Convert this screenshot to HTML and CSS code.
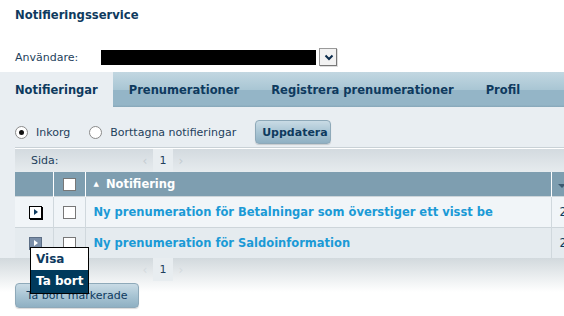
FILE: index.html
```html
<!DOCTYPE html>
<html lang="sv">
<head>
    <meta charset="UTF-8">
    <title>Notifieringsservice</title>
    <link rel="stylesheet" href="styles.css">
</head>
<body>
    <header class="top">
        <h1 class="title">Notifieringsservice</h1>
        <div class="user-row">
            <label class="user-label">Användare:</label>
            <span class="user-value"></span>
            <span class="select-btn">
                <svg width="10" height="7" viewBox="0 0 10 7"><path d="M1.5 1.5 L5 5 L8.5 1.5" fill="none" stroke="#0c2c4c" stroke-width="2"/></svg>
            </span>
        </div>
    </header>

    <nav class="tabs">
        <a class="tab active">Notifieringar</a>
        <a class="tab">Prenumerationer</a>
        <a class="tab">Registrera prenumerationer</a>
        <a class="tab">Profil</a>
    </nav>

    <main class="panel">
        <div class="filter-row">
            <label class="radio"><span class="radio-dot checked"></span>Inkorg</label>
            <label class="radio"><span class="radio-dot"></span>Borttagna notifieringar</label>
            <button class="btn btn-bold">Uppdatera</button>
        </div>

        <div class="pager pager-top">
            <span class="pager-label">Sida:</span>
            <span class="pager-arrow">&#8249;</span>
            <span class="pager-page">1</span>
            <span class="pager-arrow">&#8250;</span>
        </div>

        <table class="grid">
            <colgroup>
                <col class="col-expand">
                <col class="col-check">
                <col class="col-text">
                <col class="col-date">
            </colgroup>
            <thead>
                <tr>
                    <th></th>
                    <th class="cell-check"><span class="checkbox"></span></th>
                    <th class="cell-text"><span class="sort-arrow">&#9650;</span>Notifiering</th>
                    <th><span class="menu-arrow"></span></th>
                </tr>
            </thead>
            <tbody>
                <tr class="row-odd">
                    <td><span class="expander"></span></td>
                    <td class="cell-check"><span class="checkbox"></span></td>
                    <td class="cell-text"><a class="notif-link">Ny prenumeration för Betalningar som överstiger ett visst be</a></td>
                    <td class="cell-date">2011-05-12</td>
                </tr>
                <tr class="row-even">
                    <td class="menu-cell">
                        <span class="expander hover"></span>
                        <ul class="context-menu">
                            <li class="menu-item">Visa</li>
                            <li class="menu-item selected">Ta bort</li>
                        </ul>
                    </td>
                    <td class="cell-check"><span class="checkbox"></span></td>
                    <td class="cell-text"><a class="notif-link">Ny prenumeration för Saldoinformation</a></td>
                    <td class="cell-date">2011-05-12</td>
                </tr>
            </tbody>
        </table>

        <div class="panel-foot">
            <div class="pager pager-bottom">
                <span class="pager-label">Sida:</span>
                <span class="pager-arrow">&#8249;</span>
                <span class="pager-page">1</span>
                <span class="pager-arrow">&#8250;</span>
            </div>
            <button class="btn btn-wide">Ta bort markerade</button>
        </div>
    </main>
</body>
</html>
```

FILE: styles.css
```css
body {
    font-family: "DejaVu Sans", Verdana, sans-serif;
    font-size: 11px;
    color: #0c2c4c;
    background: #fff;
    margin: 0;
    overflow: hidden;
    width: 564px;
}

.top {
    padding: 9px 15px 0;
    height: 63px;
    box-sizing: border-box;
}

.title {
    font-size: 11.6px;
    font-weight: bold;
    color: #0e3a5e;
    margin: 0;
    line-height: 13px;
}

.user-row {
    display: flex;
    align-items: center;
    margin-top: 26px;
    height: 18px;
}

.user-label {
    width: 86px;
    color: #1e3f5c;
}

.user-value {
    display: block;
    width: 215px;
    height: 15px;
    background: #000;
}

.select-btn {
    display: flex;
    align-items: center;
    justify-content: center;
    width: 17px;
    height: 17px;
    margin-left: 3px;
    background: #f2f2f2;
    border-top: 1px solid #9a9a9a;
    border-left: 1px solid #9a9a9a;
    box-shadow: inset -1px -1px 0 #777, 1px 1px 0 #ddd;
}

/* flikar */
.tabs {
    display: flex;
    height: 35px;
    margin-top: 9px;
    background: linear-gradient(#c2d7e1, #a9c6d4 50%, #94b5c7 50%, #94b5c7 94%, #86a6b8);
}

.tab {
    display: flex;
    align-items: center;
    padding: 0 16px;
    font-size: 11.5px;
    font-weight: bold;
    color: #0e3a5e;
}

.tab.active {
    padding: 0 15px;
    background: #e9eef2;
}

/* innehåll */
.panel {
    background: #e9eef2;
    padding-top: 13px;
}

.filter-row {
    display: flex;
    align-items: flex-start;
    margin-left: 15px;
    height: 27px;
    border-bottom: 1px solid #c9d1d6;
}

.radio {
    display: flex;
    align-items: center;
    height: 24px;
    margin-right: 19px;
    color: #1e3f5c;
}

.radio-dot {
    width: 11px;
    height: 11px;
    border: 1px solid #8a8a8a;
    border-radius: 50%;
    background: #fff;
    margin-right: 8px;
    position: relative;
}

.radio-dot.checked::after {
    content: "";
    position: absolute;
    left: 3px;
    top: 3px;
    width: 5px;
    height: 5px;
    border-radius: 50%;
    background: #111;
}

.btn {
    font-family: "DejaVu Sans", Verdana, sans-serif;
    font-size: 11px;
    color: #0e3a5e;
    height: 25px;
    padding: 0 6px;
    border: 1px solid #8ea9b9;
    border-radius: 4px;
    background: linear-gradient(#c9dbe5, #a9c5d4 50%, #8fb0c3);
    box-shadow: 0 1px 1px rgba(0, 0, 0, 0.15);
    cursor: pointer;
}

.btn-bold {
    font-weight: bold;
    height: 24px;
    width: 76px;
}

.btn-wide {
    width: 124px;
    margin-left: 15px;
    margin-top: 2px;
}

.pager {
    display: flex;
    align-items: center;
    height: 23px;
    margin-left: 15px;
    color: #1e3f5c;
}

.pager-top {
    border-top: 1px solid #fff;
    background: linear-gradient(#d3dadf, #e6ebee);
}

.pager-label {
    width: 106px;
    padding-left: 16px;
}

.pager-arrow {
    width: 16px;
    text-align: center;
    color: #c4ccd1;
    font-size: 12px;
}

.pager-page {
    width: 20px;
    height: 23px;
    line-height: 23px;
    text-align: center;
    background: #e8edf0;
}

/* tabell */
.grid {
    border-collapse: collapse;
    margin-left: 15px;
    width: 620px;
    table-layout: fixed;
}

.col-expand {
    width: 38px;
}

.col-check {
    width: 32px;
}

.col-text {
    width: 466px;
}

.grid th {
    height: 24px;
    padding: 0;
    background: #7e9eb0;
    color: #fff;
    font-size: 11.5px;
    font-weight: bold;
    text-align: left;
    border-left: 1px solid #fff;
}

.grid th:first-child {
    border-left: none;
}

.grid td {
    height: 30px;
    padding: 0;
    border-left: 1px solid #d0d8dd;
    border-top: 1px solid #cdd5da;
}

.grid td:first-child {
    border-left: none;
}

.row-odd td {
    background: #f1f5f8;
}

.row-even td {
    background: #e5ebef;
}

.grid .cell-check {
    text-align: center;
}

.grid .cell-text {
    padding-left: 8px;
}

.cell-date {
    padding-left: 8px !important;
    font-size: 11.5px;
    color: #0e3a5e;
}

.sort-arrow {
    font-size: 7px;
    margin-right: 7px;
    vertical-align: 2px;
}

.menu-arrow {
    display: inline-block;
    margin-left: 6px;
    border-left: 4px solid transparent;
    border-right: 4px solid transparent;
    border-top: 4px solid #3c5a70;
}

.checkbox {
    display: inline-block;
    width: 11px;
    height: 11px;
    border: 1px solid #777;
    background: #fff;
    vertical-align: middle;
}

.notif-link {
    font-size: 11.5px;
    font-weight: bold;
    color: #1b9ad6;
    white-space: nowrap;
}

.expander {
    display: block;
    width: 11px;
    height: 11px;
    margin-left: 14px;
    border: 1px solid #000;
    background: #fff;
    box-shadow: 1px 1px 0 #000;
    position: relative;
}

.expander::after {
    content: "";
    position: absolute;
    left: 4px;
    top: 2px;
    border-top: 3.5px solid transparent;
    border-bottom: 3.5px solid transparent;
    border-left: 4px solid #0e3a5e;
}

.expander.hover {
    background: #7a8ea8;
    border-color: #5d6f86;
    box-shadow: none;
}

.expander.hover::after {
    border-left-color: #fff;
}

.menu-cell {
    position: relative;
}

.context-menu {
    position: absolute;
    left: 15px;
    top: 19px;
    z-index: 2;
    width: 57px;
    margin: 0;
    padding: 0;
    list-style: none;
    border: 1px solid #000;
    background: #fff;
}

.menu-item {
    height: 22px;
    line-height: 22px;
    padding-left: 5px;
    font-size: 12px;
    font-weight: bold;
    color: #0e3a5e;
}

.menu-item.selected {
    height: 23px;
    line-height: 23px;
    background: #003a5c;
    color: #fff;
}

.panel-foot {
    background: linear-gradient(#d2d9dd, #fff 34px);
    padding-bottom: 20px;
}

.pager-bottom .pager-arrow {
    color: #d4dade;
}
```
